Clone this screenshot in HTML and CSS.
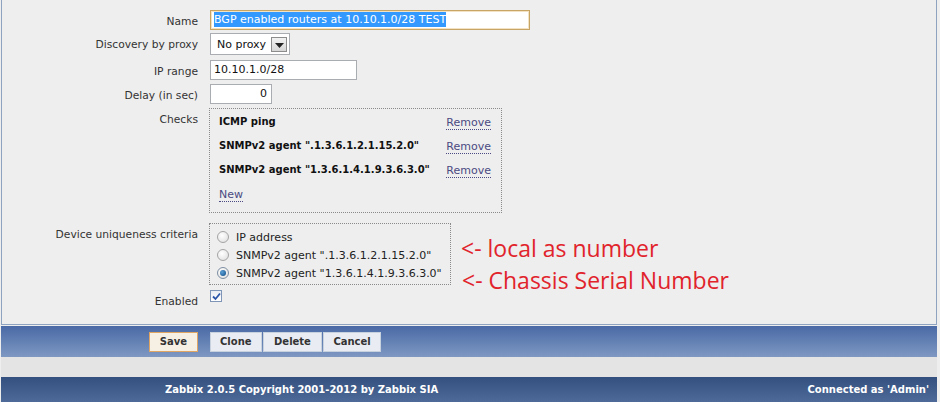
FILE: index.html
```html
<!DOCTYPE html>
<html>
<head>
<meta charset="utf-8">
<link rel="stylesheet" href="styles.css">
</head>
<body>
<div class="page">
  <div class="panel">
    <div class="row r-name">
      <div class="label">Name</div>
      <div class="field"><div class="input name-input"><span class="sel">BGP enabled routers at 10.10.1.0/28 TEST</span></div></div>
    </div>
    <div class="row r-proxy">
      <div class="label">Discovery by proxy</div>
      <div class="field">
        <div class="select"><span>No proxy</span><span class="dd"><svg width="9" height="5" viewBox="0 0 9 5"><path d="M0 0h9L4.5 5z" fill="#222"/></svg></span></div>
      </div>
    </div>
    <div class="row r-ip">
      <div class="label">IP range</div>
      <div class="field"><div class="input ip-input">10.10.1.0/28</div></div>
    </div>
    <div class="row r-delay">
      <div class="label">Delay (in sec)</div>
      <div class="field"><div class="input delay-input">0</div></div>
    </div>
    <div class="row r-checks">
      <div class="label">Checks</div>
      <div class="field">
        <div class="box checks">
          <div class="check-line"><b>ICMP ping</b><a class="link">Remove</a></div>
          <div class="check-line"><b>SNMPv2 agent ".1.3.6.1.2.1.15.2.0"</b><a class="link">Remove</a></div>
          <div class="check-line"><b>SNMPv2 agent "1.3.6.1.4.1.9.3.6.3.0"</b><a class="link">Remove</a></div>
          <div class="check-line"><a class="link">New</a></div>
        </div>
      </div>
    </div>
    <div class="row r-uniq">
      <div class="label">Device uniqueness criteria</div>
      <div class="field uniq-field">
        <div class="box uniq">
          <div class="radio-line"><span class="radio"></span>IP address</div>
          <div class="radio-line"><span class="radio"></span>SNMPv2 agent ".1.3.6.1.2.1.15.2.0"</div>
          <div class="radio-line"><span class="radio on"><span class="dot"></span></span>SNMPv2 agent "1.3.6.1.4.1.9.3.6.3.0"</div>
        </div>
        <div class="notes">
          <div class="note">&lt;- local as number</div>
          <div class="note note2">&lt;- Chassis Serial Number</div>
        </div>
      </div>
    </div>
    <div class="row r-enabled">
      <div class="label">Enabled</div>
      <div class="field">
        <span class="checkbox"><svg width="9" height="9" viewBox="0 0 9 9"><path d="M1 4.5 L3.5 7 L8 1.5" fill="none" stroke="#2b55a8" stroke-width="1.8"/></svg></span>
      </div>
    </div>
  </div>
  <div class="buttonbar">
    <div class="btn-left"><span class="btn save">Save</span></div>
    <div class="btn-group">
      <span class="btn">Clone</span><span class="btn wide">Delete</span><span class="btn">Cancel</span>
    </div>
  </div>
  <div class="gap"></div>
  <div class="footer">
    <span class="copy">Zabbix 2.0.5 Copyright 2001-2012 by Zabbix SIA</span>
    <span class="conn">Connected as 'Admin'</span>
  </div>
</div>
</body>
</html>
```

FILE: styles.css
```css
html, body {
  margin: 0;
  padding: 0;
  background: #eeeeee;
}
body {
  font-family: "DejaVu Sans", Verdana, sans-serif;
  font-size: 11px;
  color: #222;
  width: 940px;
  height: 402px;
  overflow: hidden;
}
.page {
  width: 936px;
  margin-left: 1px;
}
.panel {
  box-sizing: border-box;
  height: 325px;
  background: #eeeeee;
  border-left: 1px solid #8ea3c0;
  border-right: 1px solid #8ea3c0;
  border-bottom: 1px solid #8ea3c0;
  padding-top: 10px;
}
.row {
  display: flex;
  align-items: flex-start;
}
.label {
  width: 196px;
  flex: none;
  text-align: right;
  line-height: 18px;
  height: 17px;
  padding-top: 3px;
  color: #333;
  font-size: 10.7px;
}
.field {
  margin-left: 12px;
}
.r-proxy { margin-top: 3px; }
.r-ip { margin-top: 5px; }
.r-delay { margin-top: 4px; }
.r-checks { margin-top: 4px; }
.r-uniq { margin-top: 10px; }
.r-enabled { margin-top: 5px; }

.input {
  box-sizing: border-box;
  height: 20px;
  background: #fff;
  border: 1px solid #a9adb1;
  line-height: 18px;
  padding: 0 3px;
  color: #111;
  white-space: nowrap;
}
.name-input {
  width: 320px;
  border: 1px solid #c8a565;
  box-shadow: inset 0 0 0 1px #f1e3c4;
}
.sel {
  background: #3399ff;
  color: #fff;
  padding: 1px 0;
}
.ip-input { width: 147px; }
.delay-input { width: 62px; text-align: right; padding-right: 4px; }

.select {
  box-sizing: border-box;
  width: 80px;
  height: 22px;
  background: #fff;
  border: 1px solid #a9adb1;
  display: flex;
  align-items: center;
  justify-content: space-between;
  padding: 0 2px 0 6px;
  color: #111;
}
.dd {
  box-sizing: border-box;
  width: 16px;
  height: 15px;
  border: 1px solid #8c8c8c;
  background: linear-gradient(#f2f2f2, #d6d6d6);
  display: flex;
  align-items: flex-end;
  justify-content: center;
  padding-bottom: 3px;
}

.box {
  box-sizing: border-box;
  border: 1px dotted #8a8a8a;
  margin-left: -1px;
}
.checks {
  width: 293px;
  padding: 1px 10px 6px 9px;
}
.check-line {
  display: flex;
  justify-content: space-between;
  line-height: 24px;
  height: 24px;
}
.check-line b {
  color: #111;
  font-weight: bold;
  font-size: 10px;
}
.link {
  color: #4b4a82;
  text-decoration: none;
  border-bottom: 1px dotted #4b4a82;
  line-height: 13px;
  align-self: center;
  margin-top: 1px;
}

.uniq-field {
  display: flex;
  align-items: flex-start;
}
.uniq {
  width: 242px;
  padding: 4px 0 2px 7px;
}
.radio-line {
  display: flex;
  align-items: center;
  height: 18px;
  color: #222;
}
.radio {
  box-sizing: border-box;
  width: 12px;
  height: 12px;
  border-radius: 50%;
  border: 1px solid #a4a4a4;
  background: radial-gradient(circle at 40% 35%, #ffffff, #dcdcdc);
  margin-right: 7px;
  display: flex;
  align-items: center;
  justify-content: center;
}
.radio.on { border-color: #7d8fa3; }
.dot {
  width: 6px;
  height: 6px;
  border-radius: 50%;
  background: radial-gradient(circle at 35% 35%, #5ba0d8, #0e4a82);
}
.notes {
  margin-left: 10px;
  margin-top: 9px;
  margin-bottom: -19px;
  font-family: "Open Sans", "Noto Sans", sans-serif;
  font-size: 23px;
  color: #e1232c;
}
.note {
  line-height: 32px;
  white-space: nowrap;
}
.note2 { padding-left: 1px; }

.checkbox {
  box-sizing: border-box;
  display: flex;
  align-items: center;
  justify-content: center;
  width: 12px;
  height: 12px;
  border: 1px solid #7e95b8;
  background: linear-gradient(#e8ecf3, #ffffff);
}

.buttonbar {
  margin-top: 1px;
  height: 31px;
  background: linear-gradient(#4a6aa6, #7e98c2);
  display: flex;
  align-items: center;
}
.btn-left {
  width: 197px;
  display: flex;
  justify-content: flex-end;
}
.btn-group {
  margin-left: 12px;
  display: flex;
  gap: 1px;
}
.btn {
  box-sizing: border-box;
  height: 20px;
  line-height: 18px;
  padding: 0 9px;
  font-weight: bold;
  font-size: 10px;
  color: #333;
  background: #e9edf3;
  border: 1px solid #c8d2df;
}
.btn.wide { padding: 0 10.5px; }
.btn.save {
  background: #f6efe4;
  border: 1px solid #e0a562;
  padding: 0 10px;
}
.gap {
  height: 20px;
  background: #e4e4e4;
}
.footer {
  height: 25px;
  background: linear-gradient(#33507f, #4e6a99);
  display: flex;
  align-items: center;
  justify-content: space-between;
  color: #fff;
  font-weight: bold;
  font-size: 10px;
  padding: 0 8px 0 164px;
}
```
